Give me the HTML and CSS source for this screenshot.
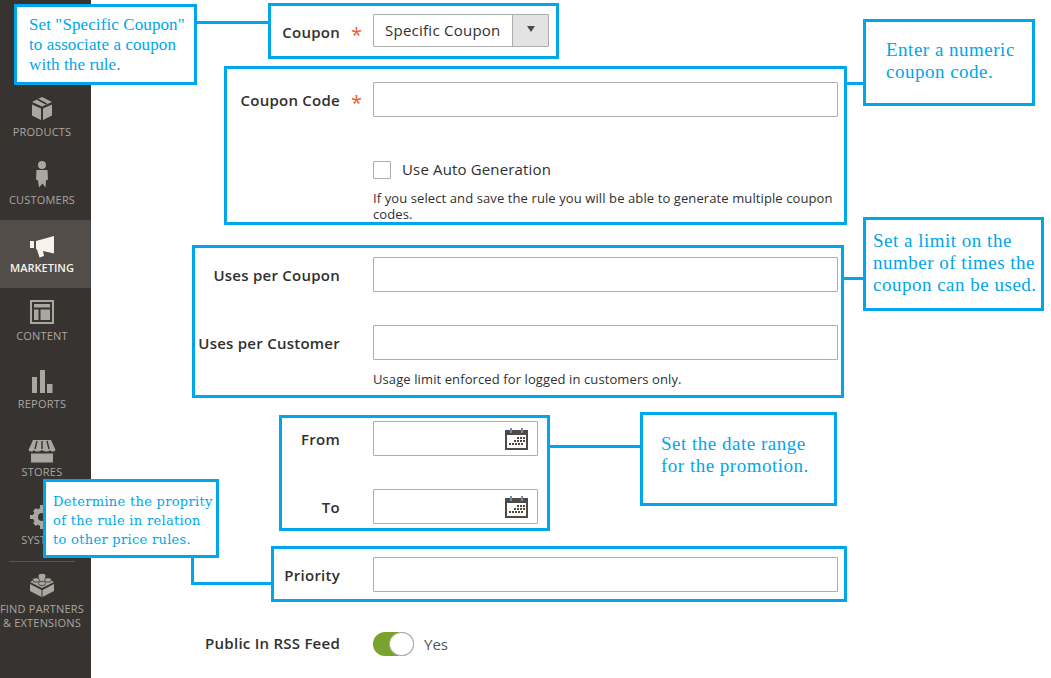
FILE: index.html
```html
<!DOCTYPE html>
<html lang="en">
<head>
  <meta charset="UTF-8">
  <title>Cart Price Rule | Coupon</title>
  <link rel="stylesheet" href="styles.css">
</head>
<body>

  <div class="page">
    <nav class="sidebar">
      <a class="nav-item">
        <svg class="nav-icon" width="24" height="36" viewBox="0 0 24 36"><g transform="translate(0 6)"><path d="M12 1 22 6 12 10.500 2 6Z"/><path d="M2 8.500 11 12.500V24L2 19.500Z"/><path d="M22 8.500 13 12.500V24L22 19.500Z"/><path d="M7.500 3.200 16.500 8" stroke="#373330" stroke-width="1.600"/></g></svg>
        <span>Products</span>
      </a>
      <a class="nav-item">
        <svg class="nav-icon" width="24" height="36" viewBox="0 0 24 36"><g transform="translate(0 2.500)"><circle cx="12" cy="4.500" r="4"/><path d="M6.500 9.500H17.500L18 19 16 20 15.500 27 12.500 23 9 27 8 20 6 19Z"/></g></svg>
        <span>Customers</span>
      </a>
      <a class="nav-item active">
        <svg class="nav-icon" width="26" height="36" viewBox="0 0 26 36"><g transform="translate(0 9)"><path d="M1 6H5V13H1Z"/><path d="M7 6 25 1V18.500L14 16 15 21 10.500 22.500 8 14.500 7 14Z"/></g></svg>
        <span>Marketing</span>
      </a>
      <a class="nav-item">
        <svg class="nav-icon" width="24" height="36" viewBox="0 0 24 36"><g transform="translate(0 6)"><path fill-rule="evenodd" d="M0 0H24V24H0ZM2 2V22H22V2Z"/><path d="M4 4H20V7.500H4ZM4 9.500H8.500V20H4ZM10.500 9.500H20V20H10.500Z"/></g></svg>
        <span>Content</span>
      </a>
      <a class="nav-item">
        <svg class="nav-icon" width="24" height="36" viewBox="0 0 24 36"><g transform="translate(0 7)"><path d="M2 8H7V24H2ZM10 1H15V24H10ZM17 15H22.500V24H17Z"/></g></svg>
        <span>Reports</span>
      </a>
      <a class="nav-item">
        <svg class="nav-icon" width="28" height="36" viewBox="0 0 28 36"><g transform="translate(0 10)"><path d="M5 0H23L27.500 10C26 12 23.500 12 22 10 20.500 12 17 12 14 10 11 12 7.500 12 6 10 4.500 12 2 12 .5 10Z"/><path d="M3 13.500H25V22.500H3Z"/><path d="M9 1 7 9M14 1V9M19 1 21 9" stroke="#373330" stroke-width="1.400"/></g></svg>
        <span>Stores</span>
      </a>
      <a class="nav-item">
        <svg class="nav-icon" width="24" height="36" viewBox="0 0 24 36"><g transform="translate(0 7)"><circle cx="12" cy="12" r="6.500" fill="none" stroke="#aaa6a0" stroke-width="5"/><path d="M10 0H14V5H10ZM10 19H14V24H10ZM0 10H5V14H0ZM19 10H24V14H19ZM3 6 6 3 9 6 6 9ZM15 18 18 15 21 18 18 21ZM15 6 18 3 21 6 18 9ZM3 18 6 15 9 18 6 21Z"/></g></svg>
        <span>System</span>
      </a>
      <a class="nav-item partners">
        <svg class="nav-icon" width="26" height="36" viewBox="0 0 26 36"><g transform="translate(0 4)"><path d="M13 3 25 9 13 15 1 9Z"/><path d="M1 11 12.500 17V24L1 18ZM25 11 13.500 17V24L25 18Z"/><ellipse cx="13" cy="3" rx="3.500" ry="2.200"/><ellipse cx="7" cy="7" rx="3.500" ry="2.200" stroke="#373330" stroke-width=".8"/><ellipse cx="19" cy="7" rx="3.500" ry="2.200" stroke="#373330" stroke-width=".8"/><ellipse cx="13" cy="10.500" rx="3.500" ry="2.200" stroke="#373330" stroke-width=".8"/></g></svg>
        <span>Find Partners<br>&amp; Extensions</span>
      </a>
    </nav>

    <main class="rule-form">
      <div class="field">
        <label>Coupon</label>
        <span class="required">*</span>
        <div class="select-box">
          <span class="select-value">Specific Coupon</span>
          <span class="select-action"><i class="arrow"></i></span>
        </div>
      </div>

      <div class="field has-note">
        <label>Coupon Code</label>
        <span class="required">*</span>
        <input class="text-input" type="text">
        <div class="check-row">
          <input class="check-input" type="checkbox">
          <span class="check-label">Use Auto Generation</span>
        </div>
        <p class="note">If you select and save the rule you will be able to generate multiple coupon codes.</p>
      </div>

      <div class="field">
        <label>Uses per Coupon</label>
        <span></span>
        <input class="text-input" type="text">
      </div>

      <div class="field has-usage">
        <label>Uses per Customer</label>
        <span></span>
        <input class="text-input" type="text">
        <p class="note usage-note">Usage limit enforced for logged in customers only.</p>
      </div>

      <div class="field">
        <label>From</label>
        <span></span>
        <div class="date-box">
          <input class="text-input" type="text">
          <svg class="calendar" width="23" height="23" viewBox="0 0 23 23"><path fill="#514943" d="M0 3H5V5H7V3H16V5H18V3H23V23H0Z"/><path fill="#fff" d="M2 8H21V21H2Z"/><path fill="#6d90b0" d="M5 1H7V6H5ZM16 1H18V6H16Z"/><path fill="#514943" d="M12 10H14V12H12ZM15 10H17V12H15ZM18 10H20V12H18ZM9 13H11V15H9ZM12 13H14V15H12ZM15 13H17V15H15ZM18 13H20V15H18ZM4 16H6V18H4ZM7 16H9V18H7ZM10 16H12V18H10ZM13 16H15V18H13ZM16 16H18V18H16Z"/></svg>
        </div>
      </div>

      <div class="field">
        <label>To</label>
        <span></span>
        <div class="date-box">
          <input class="text-input" type="text">
          <svg class="calendar" width="23" height="23" viewBox="0 0 23 23"><path fill="#514943" d="M0 3H5V5H7V3H16V5H18V3H23V23H0Z"/><path fill="#fff" d="M2 8H21V21H2Z"/><path fill="#6d90b0" d="M5 1H7V6H5ZM16 1H18V6H16Z"/><path fill="#514943" d="M12 10H14V12H12ZM15 10H17V12H15ZM18 10H20V12H18ZM9 13H11V15H9ZM12 13H14V15H12ZM15 13H17V15H15ZM18 13H20V15H18ZM4 16H6V18H4ZM7 16H9V18H7ZM10 16H12V18H10ZM13 16H15V18H13ZM16 16H18V18H16Z"/></svg>
        </div>
      </div>

      <div class="field">
        <label>Priority</label>
        <span></span>
        <input class="text-input" type="text">
      </div>

      <div class="field rss-field">
        <label>Public In RSS Feed</label>
        <span></span>
        <div class="toggle-row">
          <span class="toggle"><i class="knob"></i></span>
          <span class="toggle-label">Yes</span>
        </div>
      </div>
    </main>

    <!-- annotations drawn over the form -->
    <div class="frame frame-coupon"></div>
    <div class="frame frame-code"></div>
    <div class="frame frame-uses"></div>
    <div class="frame frame-dates"></div>
    <div class="frame frame-priority"></div>

    <div class="line line-coupon"></div>
    <div class="line line-code"></div>
    <div class="line line-uses"></div>
    <div class="line line-dates"></div>
    <div class="line-priority"></div>

    <div class="callout callout-coupon">Set "Specific Coupon"<br>to associate a coupon<br>with the rule.</div>
    <div class="callout callout-code">Enter a numeric<br>coupon code.</div>
    <div class="callout callout-uses">Set a limit on the<br>number of times the<br>coupon can be used.</div>
    <div class="callout callout-dates">Set the date range<br>for the promotion.</div>
    <div class="callout callout-priority">Determine the proprity<br>of the rule in relation<br>to other price rules.</div>
  </div>

</body>
</html>
```

FILE: styles.css
```css
* {
  box-sizing: border-box;
}

body {
  margin: 0;
  background-color: #fff;
  font-family: 'Open Sans', sans-serif;
  color: #303030;
}

.page {
  position: relative;
  display: flex;
  height: 678px;
  overflow: hidden;
}

/* sidebar */
.sidebar {
  flex: 0 0 91px;
  padding-top: 84px;
  background-color: #373330;
}

.nav-item {
  display: flex;
  flex-direction: column;
  align-items: center;
  height: 68px;
  padding-right: 7px;
  color: #aaa6a0;
  font-size: 11px;
  line-height: 14px;
  letter-spacing: .2px;
  text-align: center;
  text-transform: uppercase;
  white-space: nowrap;
}

.nav-item span {
  position: absolute;
  margin-top: 41px;
}

.nav-icon {
  margin-top: 6px;
  fill: #aaa6a0;
}

.nav-item.active {
  background-color: #524d49;
  color: #f7f3eb;
  font-weight: 600;
  letter-spacing: 0;
}

.nav-item.active .nav-icon {
  fill: #f7f3eb;
}

.nav-item.partners {
  margin: 1px 16px 0 9px;
  padding: 1px 0 0;
  border-top: 1px solid #5a5550;
}

.nav-item.partners span {
  margin-top: 39px;
}

/* form */
.rule-form {
  flex: 1;
  padding-top: 14px;
}

.field {
  display: grid;
  grid-template-columns: 249px 33px 465px;
  align-items: start;
  margin-bottom: 33px;
}

.field label {
  height: 35px;
  padding-top: 1px;
  font-size: 15px;
  font-weight: 600;
  line-height: 35px;
  letter-spacing: .25px;
  text-align: right;
  white-space: nowrap;
}

.required {
  height: 35px;
  padding: 3px 0 0 11px;
  color: #e2622f;
  font-size: 20px;
  line-height: 35px;
}

.text-input {
  display: block;
  width: 100%;
  height: 35px;
  padding: 0 10px;
  border: 1px solid #adadad;
  border-radius: 1px;
  background-color: #fff;
}

.select-box {
  display: flex;
  width: 176px;
  height: 33px;
  border: 1px solid #adadad;
  border-radius: 1px;
}

.select-value {
  flex: 1;
  padding-left: 11px;
  font-size: 15px;
  line-height: 31px;
  letter-spacing: .25px;
}

.select-action {
  display: flex;
  flex: 0 0 36px;
  align-items: center;
  justify-content: center;
  border-left: 1px solid #adadad;
  background-color: #e3e3e3;
}

.arrow {
  margin-top: -3px;
  border-top: 6px solid #514943;
  border-left: 4px solid transparent;
  border-right: 4px solid transparent;
}

.has-note {
  margin-bottom: 35px;
}

.has-note .check-row,
.has-note .note {
  grid-column: 3;
}

.has-note .note {
  margin-top: 11px;
}

.check-row {
  display: flex;
  align-items: center;
  gap: 11px;
  height: 19px;
  margin-top: 43px;
  font-size: 15px;
  letter-spacing: .15px;
}

.check-label {
  margin-top: -2px;
}

.check-input {
  appearance: none;
  width: 18px;
  height: 18px;
  margin: 0;
  border: 1px solid #adadad;
  border-radius: 1px;
}

.note {
  margin: 12px 0 0;
  font-size: 13px;
  line-height: 16px;
  letter-spacing: .1px;
}

.usage-note {
  grid-column: 3;
  margin-top: 11px;
}

.has-usage {
  margin-bottom: 34px;
}

.date-box {
  position: relative;
  width: 165px;
}

.calendar {
  position: absolute;
  top: 6px;
  right: 10px;
}

.rss-field {
  margin-top: 35px;
}

.rss-field label {
  margin-top: -2px;
}

.toggle-row {
  display: flex;
  align-items: center;
  gap: 10px;
  height: 24px;
  margin-top: 5px;
}

.toggle {
  display: flex;
  justify-content: flex-end;
  width: 41px;
  height: 24px;
  border-radius: 12px;
  background-color: #79a22e;
}

.knob {
  width: 25px;
  height: 24px;
  border: 1px solid #adadad;
  border-radius: 50%;
  background-color: #fff;
}

.toggle-label {
  font-size: 15px;
  color: #555;
}

/* annotations */
.frame,
.line,
.line-priority,
.callout {
  position: absolute;
  border-color: #00a6ea;
  border-style: solid;
}

.frame {
  border-width: 3px;
}

.frame-coupon { left: 268px; top: 3px; width: 291px; height: 56px; }
.frame-code { left: 224px; top: 66px; width: 623px; height: 159px; }
.frame-uses { left: 192px; top: 245px; width: 652px; height: 153px; }
.frame-dates { left: 279px; top: 415px; width: 271px; height: 116px; }
.frame-priority { left: 271px; top: 546px; width: 576px; height: 56px; }

.line {
  height: 3px;
  background-color: #00a6ea;
  border-width: 0;
}

.line-coupon { left: 197px; top: 21px; width: 71px; }
.line-code { left: 847px; top: 82px; width: 16px; }
.line-uses { left: 844px; top: 277px; width: 19px; }
.line-dates { left: 550px; top: 445px; width: 90px; }

.line-priority {
  left: 191px;
  top: 558px;
  width: 80px;
  height: 27px;
  border-width: 0 0 3px 3px;
}

.callout {
  border-width: 3px;
  background-color: #fff;
  color: #00a6ea;
  font-family: 'Liberation Serif', serif;
  font-size: 19px;
  line-height: 22px;
  letter-spacing: .5px;
  white-space: nowrap;
}

.callout-coupon {
  left: 14px;
  top: 4px;
  width: 183px;
  height: 81px;
  padding: 8px 0 0 12px;
  font-size: 17px;
  line-height: 20px;
  letter-spacing: .1px;
}

.callout-code {
  left: 863px;
  top: 19px;
  width: 172px;
  height: 87px;
  padding: 17px 0 0 20px;
}

.callout-uses {
  left: 863px;
  top: 217px;
  width: 181px;
  height: 94px;
  padding: 10px 0 0 7px;
}

.callout-dates {
  left: 640px;
  top: 412px;
  width: 197px;
  height: 94px;
  padding: 18px 0 0 18px;
}

.callout-priority {
  left: 43px;
  top: 479px;
  width: 176px;
  height: 79px;
  padding: 10px 0 0 7px;
  font-family: 'DejaVu Serif', serif;
  font-size: 13px;
  line-height: 19px;
  letter-spacing: .3px;
}
```
